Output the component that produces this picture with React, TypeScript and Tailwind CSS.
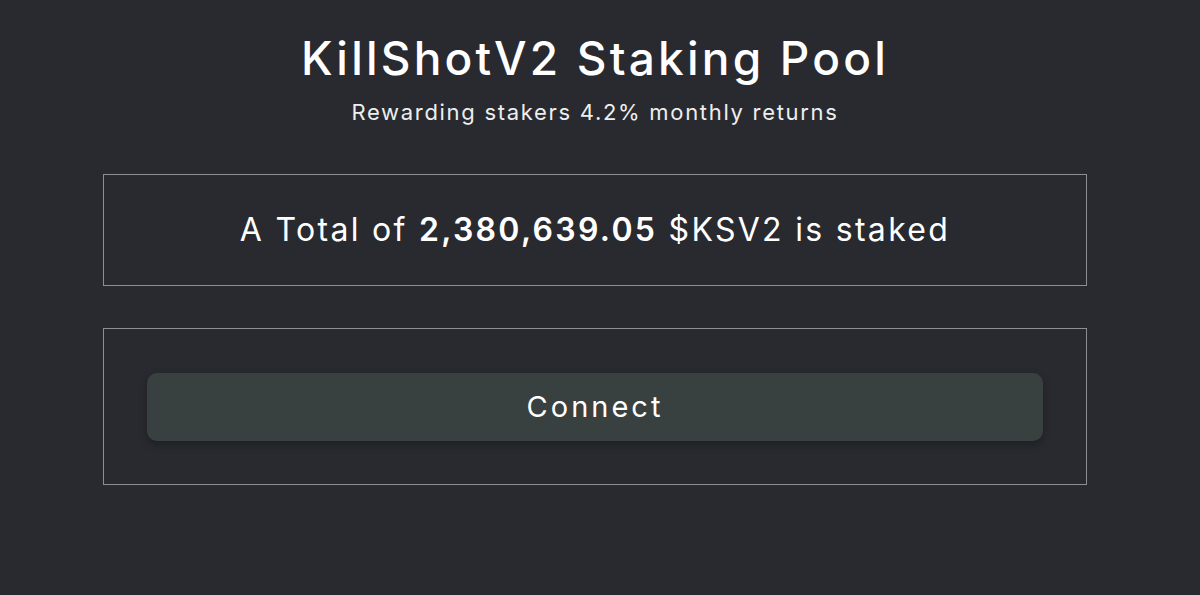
import React from 'react';

const App: React.FC = () => {
  return (
    <div
      className="min-h-screen w-full bg-[#282a2f] text-white"
      style={{ fontFamily: 'Inter, "Noto Sans", sans-serif' }}
    >
      <div className="w-[1190px] flex flex-col items-center">
        <h1 className="mt-[26px] text-[46px] leading-[64px] font-medium tracking-[3.2px]">
          KillShotV2 Staking Pool
        </h1>
        <p className="mt-[6px] text-[22px] leading-[32px] text-[#eeeeee] tracking-[1.7px]">
          Rewarding stakers 4.2% monthly returns
        </p>

        <div className="mt-[46px] w-[984px] h-[112px] border border-[#8b8e93] flex items-center justify-center">
          <p className="text-[32px] tracking-[2.3px]">
            A Total of <span className="font-semibold">2,380,639.05</span> $KSV2 is staked
          </p>
        </div>

        <div className="mt-[42px] w-[984px] border border-[#8b8e93] px-[43px] pt-[44px] pb-[43px]">
          <button className="w-full h-[68px] rounded-[10px] bg-[#384140] text-[29px] tracking-[3px] text-white shadow-[0_4px_8px_rgba(0,0,0,0.25)]">
            Connect
          </button>
        </div>
      </div>
    </div>
  );
};

export default App;
